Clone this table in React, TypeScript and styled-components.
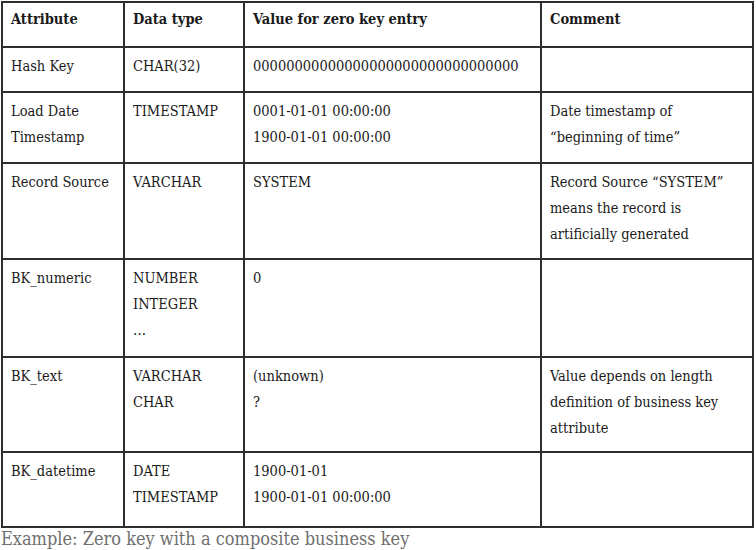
import styled, { createGlobalStyle } from 'styled-components'

const GlobalStyle = createGlobalStyle`
  html, body {
    margin: 0;
    padding: 0;
    background: #ffffff;
  }
`

type Row = {
  height: number
  cells: string[][]
}

const columnWidths = [122, 120, 297, 212]

const rows: Row[] = [
  { height: 45, cells: [['Hash Key'], ['CHAR(32)'], ['00000000000000000000000000000000'], []] },
  {
    height: 71,
    cells: [
      ['Load Date', 'Timestamp'],
      ['TIMESTAMP'],
      ['0001-01-01 00:00:00', '1900-01-01 00:00:00'],
      ['Date timestamp of', '“beginning of time”'],
    ],
  },
  {
    height: 96,
    cells: [
      ['Record Source'],
      ['VARCHAR'],
      ['SYSTEM'],
      ['Record Source “SYSTEM”', 'means the record is', 'artificially generated'],
    ],
  },
  { height: 98, cells: [['BK_numeric'], ['NUMBER', 'INTEGER', '…'], ['0'], []] },
  {
    height: 95,
    cells: [
      ['BK_text'],
      ['VARCHAR', 'CHAR'],
      ['(unknown)', '?'],
      ['Value depends on length', 'definition of business key', 'attribute'],
    ],
  },
  {
    height: 75,
    cells: [['BK_datetime'], ['DATE', 'TIMESTAMP'], ['1900-01-01', '1900-01-01 00:00:00'], []],
  },
]

const headers = ['Attribute', 'Data type', 'Value for zero key entry', 'Comment']

export default function App(): JSX.Element {
  return (
    <Page>
      <GlobalStyle />
      <Table>
        <colgroup>
          {columnWidths.map((w, i) => (
            <Col key={i} $width={w} />
          ))}
        </colgroup>
        <thead>
          <tr>
            {headers.map((h) => (
              <HeadCell key={h} $height={45}>
                {h}
              </HeadCell>
            ))}
          </tr>
        </thead>
        <tbody>
          {rows.map((row, i) => (
            <tr key={i}>
              {row.cells.map((lines, j) => (
                <Cell key={j} $height={row.height}>
                  {lines.map((line) => (
                    <Line key={line}>{line}</Line>
                  ))}
                </Cell>
              ))}
            </tr>
          ))}
        </tbody>
      </Table>
      <Caption>Example: Zero key with a composite business key</Caption>
    </Page>
  )
}

const Page = styled.div`
  padding: 1px 0 0 1px;
  width: 753px;
  font-family: 'DejaVu Serif', 'Liberation Serif', serif;
  font-stretch: condensed;
`

const Table = styled.table`
  border-collapse: collapse;
  table-layout: fixed;
  width: 751px;
  border: 2px solid #555555;
`

const Col = styled.col<{ $width: number }>`
  width: ${(p) => p.$width}px;
`

const HeadCell = styled.th<{ $height: number }>`
  height: ${(p) => p.$height}px;
  padding: 3px 8px 0;
  box-sizing: border-box;
  border: 2px solid #2e2e2e;
  text-align: left;
  vertical-align: top;
  font-size: 14.5px;
  line-height: 26px;
  font-weight: 700;
  color: #1a1a1a;
`

const Cell = styled.td<{ $height: number }>`
  height: ${(p) => p.$height}px;
  padding: 5px 8px 0;
  box-sizing: border-box;
  border: 2px solid #2e2e2e;
  vertical-align: top;
  font-size: 14.5px;
  line-height: 26px;
  color: #1a1a1a;
`

const Line = styled.div`
  white-space: nowrap;
`

const Caption = styled.div`
  margin-top: 0;
  font-size: 18px;
  line-height: 22px;
  color: #6f6f6f;
`
